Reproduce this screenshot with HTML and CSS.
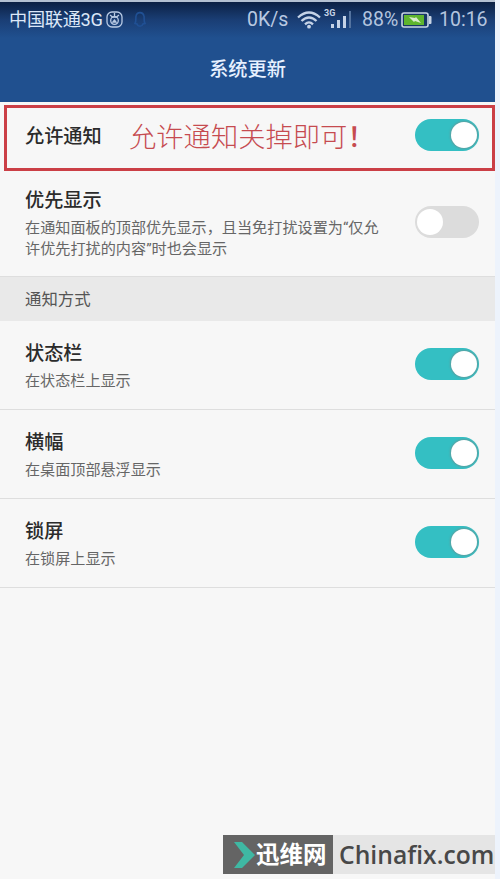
FILE: index.html
```html
<!DOCTYPE html>
<html lang="zh-CN">
<head>
<meta charset="utf-8">
<title>系统更新</title>
<link rel="stylesheet" href="styles.css">
</head>
<body>
<main class="phone">
  <header class="header">
    <div class="status">
      <span class="carrier">中国联通3G</span>
      <svg class="sim" width="17" height="17" viewBox="0 0 17 17" fill="none" stroke="#b9cbe5" stroke-width="1.3"><rect x="1" y="1" width="15" height="15" rx="5"/><path d="M4 4l2.500 2h4L13 4M8.500 2v3"/><circle cx="8.500" cy="9.500" r="3.800"/><path d="M7 11l1.500-2L10 11z" fill="#b9cbe5"/></svg>
      <svg class="bell" width="14" height="17" viewBox="0 0 14 17" fill="none" stroke="#205094" stroke-width="1.600"><path d="M2 12.500C3.500 10 2.500 7 3 5c1-4.500 7-4.500 8 0 .5 2-.5 5 1 7.500l-2 .5c-1 3-5 3-6 0z"/></svg>
      <span class="speed">0K/s</span>
      <svg class="wifi" width="24" height="18" viewBox="0 0 24 18" fill="none" stroke="#c5d3e7" stroke-width="2.300"><path d="M1 6.500Q12-3.500 23 6.500M4.500 10Q12 3 19.500 10M8 13.300Q12 9.500 16 13.300"/><circle cx="12" cy="15.700" r="1.900" fill="#c5d3e7" stroke="none"/></svg>
      <span class="cell"><span class="net">3G</span>
        <svg class="bars" width="21" height="17" viewBox="0 0 21 17"><path d="M0 13h3v4H0zM6 9h3v8H6zM12 5h3v12h-3z" fill="#c5d3e7"/><path d="M18 0h2v17h-2z" fill="#54739f"/></svg>
      </span>
      <span class="percent">88%</span>
      <svg class="battery" width="31" height="16" viewBox="0 0 31 16"><rect x="1" y="1" width="26" height="14" rx="2" fill="#173766" stroke="#c8d5e5" stroke-width="1.600"/><path d="M28 4h1.500q1 0 1 1v6q0 1-1 1H28z" fill="#c8d5e5"/><path d="M3 3h20v10H3z" fill="#5eb52e"/><path d="M8 5l6 1 1-1 5 6-6-2-1 1z" fill="#d9eccd"/></svg>
      <span class="clock">10:16</span>
    </div>
    <h1 class="title">系统更新</h1>
  </header>

  <section class="row allow">
    <div class="text"><h2>允许通知</h2></div>
    <span class="note">允许通知关掉即可<b>！</b></span>
    <span class="switch on"></span>
  </section>
  <section class="row priority">
    <div class="text"><h2>优先显示</h2><p>在通知面板的顶部优先显示，且当免打扰设置为<span class="quote">“</span>仅允<br>许优先打扰的内容<span class="quote">”</span>时也会显示</p></div>
    <span class="switch"></span>
  </section>
  <h3 class="group">通知方式</h3>
  <section class="row">
    <div class="text"><h2>状态栏</h2><p>在状态栏上显示</p></div>
    <span class="switch on"></span>
  </section>
  <section class="row">
    <div class="text"><h2>横幅</h2><p>在桌面顶部悬浮显示</p></div>
    <span class="switch on"></span>
  </section>
  <section class="row">
    <div class="text"><h2>锁屏</h2><p>在锁屏上显示</p></div>
    <span class="switch on"></span>
  </section>
  <footer class="brand">
    <div class="brand-name"><svg width="22" height="26" viewBox="0 0 22 26"><path d="M0 0h8l13 13L8 26H0l10-13z" fill="#3fb8a3"/></svg><span>迅维网</span></div>
    <div class="brand-site"><span>Chinafix.com</span></div>
  </footer>
</main>
</body>
</html>
```
FILE: styles.css
```css
* { box-sizing: border-box; }
body {
  margin: 0;
  height: 879px;
  overflow: hidden;
  background: #edf3fc;
  font-family: Roboto, "Noto Sans CJK SC", sans-serif;
}
h1, h2, h3, p { margin: 0; }
.phone {
  display: flex;
  flex-direction: column;
  width: 495px;
  height: 879px;
  border-top: 2px solid #b4c1d2;
  background: #f7f7f7;
}
.header {
  flex: none;
  height: 100px;
  background: linear-gradient(#0c2144 0, #1a3e75 18px, #20508f 36px, #20508f);
  color: #e7f1ff;
}
.status {
  display: flex;
  align-items: center;
  height: 35px;
  padding-left: 9px;
  line-height: 24px;
  white-space: nowrap;
}
.status svg { flex: none; display: block; }
.carrier { width: 94px; padding-top: 1px; font-size: 18.200px; letter-spacing: -0.3px; color: #dce8f8; }
.sim { margin-left: 3px; }
.bell { margin-left: 10px; }
.speed { width: 44px; margin-left: 100px; font-size: 19.500px; color: #b9c9e1; }
.wifi { margin-left: 6px; }
.cell { position: relative; width: 28px; height: 24px; margin-left: 3px; }
.net {
  position: absolute;
  left: 0;
  top: 0;
  font: bold 9px/10px Roboto, sans-serif;
  color: #c5d3e7;
}
.bars { position: absolute; left: 7px; top: 3px; }
.percent { width: 38px; margin-left: 10px; font-size: 19.500px; color: #b4c5df; }
.battery { margin-left: 1px; }
.clock { margin-left: 7px; font-size: 19.500px; color: #b4c5df; }
.title {
  padding-top: 18px;
  font-size: 19.2px;
  font-weight: 500;
  line-height: 30px;
  text-align: center;
}
.row {
  display: flex;
  flex: none;
  align-items: center;
  height: 89px;
  padding: 0 16px 2px 25px;
  border-bottom: 1px solid #dedede;
}
.text { flex: 1; padding-top: 4px; color: #2b2b2b; white-space: nowrap; }
.text h2 { font-size: 19.2px; font-weight: 500; line-height: 28px; }
.text p { margin-top: 3px; font-size: 15.1px; line-height: 21px; color: #666; }
.quote { font-family: Roboto, sans-serif; }
.switch {
  flex: none;
  width: 64px;
  height: 32px;
  padding: 3px 2px;
  border-radius: 16px;
  background: #dcdcdc;
}
.switch::before {
  content: "";
  display: block;
  width: 26px;
  height: 26px;
  border-radius: 50%;
  background: #fff;
}
.switch.on { background: #34bfc3; }
.switch.on::before { margin-left: auto; box-shadow: 0 0 2px 1px #5c9fa0; }
.allow {
  height: 66px;
  margin: 3px 0 0 4px;
  padding: 0 13px 7px 18px;
  border: 3px solid #cb3f46;
}
.allow .text { flex: none; width: 104px; }
.note {
  flex: 1;
  font-family: "Noto Sans CJK SC", sans-serif;
  font-size: 27.3px;
  font-weight: 300;
  line-height: 36px;
  white-space: nowrap;
  color: #c64b50;
}
.note b { font-weight: 500; }
.priority { height: 105px; padding-bottom: 4px; border: 0; }
.priority p { font-size: 15.150px; }
.group {
  flex: none;
  height: 45px;
  padding-left: 25px;
  border-top: 1px solid #dedede;
  background: #e9e9e9;
  font-size: 16.400px;
  font-weight: 400;
  line-height: 45px;
  color: #555;
}
.brand {
  display: flex;
  width: 272px;
  height: 39px;
  margin: auto 0 5px auto;
}
.brand-name {
  display: flex;
  flex: none;
  align-items: center;
  width: 110px;
  padding-left: 11px;
  background: #646464;
  color: #fff;
  font-size: 23.500px;
  font-weight: 700;
}
.brand-name svg { flex: none; }
.brand-name span { margin-top: -3px; }
.brand-site {
  flex: 1;
  min-width: 0;
  padding-left: 6px;
  background: #e5e5e5;
  color: #484848;
  font: 600 24.700px/39px "Open Sans", sans-serif;
  white-space: nowrap;
}
```
